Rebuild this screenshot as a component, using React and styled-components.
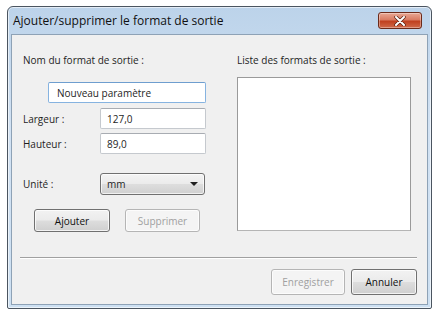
import styled, { createGlobalStyle } from 'styled-components';

const Global = createGlobalStyle`
    html, body {
        margin: 0;
        padding: 0;
        background: #ffffff;
    }
    body {
        font-family: "Open Sans", "Noto Sans", "DejaVu Sans", sans-serif;
        font-size: 10px;
        color: #1e1e1e;
    }
`

const Page = styled.div`
    width: 437px;
    height: 312px;
    padding: 6px 0 0 7px;
    box-sizing: border-box;
`

const Window = styled.div`
    width: 425px;
    height: 303px;
    box-sizing: border-box;
    border: 1px solid #4b5560;
    border-radius: 6px 6px 2px 2px;
    background: linear-gradient(180deg, #bcd3ea 0%, #d2e2f3 40%, #cde0f2 100%);
    display: flex;
    flex-direction: column;
    padding: 0 3px 3px 3px;
    box-shadow: inset 0 0 0 1px rgba(255,255,255,0.6);
`

const TitleBar = styled.div`
    height: 27px;
    display: flex;
    align-items: center;
    justify-content: space-between;
    padding: 0 6px 0 2px;
`

const Title = styled.span`
    font-size: 12px;
    color: #101010;
`

const CloseButton = styled.div`
    width: 44px;
    height: 17px;
    box-sizing: border-box;
    border: 1px solid #6b2a1a;
    border-radius: 3px;
    background: linear-gradient(180deg, #e9a894 0%, #d97b62 45%, #c0401f 55%, #d06a4a 100%);
    display: flex;
    align-items: center;
    justify-content: center;
    box-shadow: inset 0 0 0 1px rgba(255,255,255,0.35);
`

const Body = styled.div`
    flex: 1;
    background: #f0f0f0;
    border: 1px solid #8ea2b6;
    padding: 18px 10px 0 11px;
    display: flex;
    flex-direction: column;
`

const Columns = styled.div`
    display: flex;
    gap: 31px;
`

const Left = styled.div`
    width: 183px;
    display: flex;
    flex-direction: column;
`

const Right = styled.div`
    width: 174px;
    display: flex;
    flex-direction: column;
`

const Label = styled.div`
    height: 14px;
    line-height: 14px;
    white-space: nowrap;
`

const Row = styled.div`
    display: flex;
    align-items: center;
    margin-top: ${p => p.$top}px;
`

const RowLabel = styled.div`
    width: 77px;
    white-space: nowrap;
`

const TextBox = styled.div`
    box-sizing: border-box;
    height: 21px;
    width: ${p => p.$width}px;
    margin-left: ${p => p.$indent || 0}px;
    background: #ffffff;
    border: 1px solid ${p => p.$focus ? '#86b3e0' : '#c5c9ce'};
    border-top-color: ${p => p.$focus ? '#6e9ecf' : '#a8acb2'};
    border-radius: 2px;
    display: flex;
    align-items: center;
    padding-left: ${p => p.$pad || 6}px;
    white-space: nowrap;
`

const Select = styled.div`
    box-sizing: border-box;
    height: 22px;
    width: 105px;
    border: 1px solid #707070;
    border-radius: 3px;
    background: linear-gradient(180deg, #f4f4f4 0%, #ebebeb 48%, #dddddd 52%, #d0d0d0 100%);
    box-shadow: inset 0 0 0 1px rgba(255,255,255,0.7);
    display: flex;
    align-items: center;
    justify-content: space-between;
    padding: 0 6px 0 6px;
`

const Arrow = styled.span`
    width: 0;
    height: 0;
    border-left: 4px solid transparent;
    border-right: 4px solid transparent;
    border-top: 4px solid #202020;
`

const ButtonRow = styled.div`
    display: flex;
    gap: ${p => p.$gap}px;
    margin-top: ${p => p.$top || 0}px;
    padding-left: ${p => p.$indent || 0}px;
    justify-content: ${p => p.$end ? 'flex-end' : 'flex-start'};
`

const Button = styled.div`
    box-sizing: border-box;
    width: ${p => p.$width}px;
    height: ${p => p.$height}px;
    border: 1px solid ${p => p.$disabled ? '#b5b5b5' : '#707070'};
    border-radius: 3px;
    background: ${p => p.$disabled
        ? '#f4f4f4'
        : 'linear-gradient(180deg, #f2f2f2 0%, #ebebeb 48%, #dddddd 52%, #cfcfcf 100%)'};
    box-shadow: inset 0 0 0 1px rgba(255,255,255,0.75);
    color: ${p => p.$disabled ? '#a0a0a0' : '#101010'};
    display: flex;
    align-items: center;
    justify-content: center;
`

const ListBox = styled.div`
    margin-top: 10px;
    height: 154px;
    box-sizing: border-box;
    background: #ffffff;
    border: 1px solid #9a9a9a;
    border-bottom-color: #b5b5b5;
`

const Separator = styled.div`
    margin: 25px 0 0 -3px;
    height: 1px;
    background: #a0a0a0;
    border-bottom: 1px solid #ffffff;
`

function App() {
    return (
        <>
            <Global />
            <Page>
                <Window>
                    <TitleBar>
                        <Title>Ajouter/supprimer le format de sortie</Title>
                        <CloseButton>
                            <svg width="12" height="10" viewBox="0 0 12 10">
                                <path d="M2 1 L10 9 M10 1 L2 9" stroke="#5a2010" strokeWidth="3.4" strokeLinecap="round" />
                                <path d="M2 1 L10 9 M10 1 L2 9" stroke="#ffffff" strokeWidth="2" strokeLinecap="round" />
                            </svg>
                        </CloseButton>
                    </TitleBar>
                    <Body>
                        <Columns>
                            <Left>
                                <Label>Nom du format de sortie :</Label>
                                <Row $top={15}>
                                    <TextBox $width={158} $indent={25} $focus $pad={8}>Nouveau paramètre</TextBox>
                                </Row>
                                <Row $top={5}>
                                    <RowLabel>Largeur :</RowLabel>
                                    <TextBox $width={106}>127,0</TextBox>
                                </Row>
                                <Row $top={4}>
                                    <RowLabel>Hauteur :</RowLabel>
                                    <TextBox $width={106}>89,0</TextBox>
                                </Row>
                                <Row $top={19}>
                                    <RowLabel>Unité :</RowLabel>
                                    <Select>
                                        <span>mm</span>
                                        <Arrow />
                                    </Select>
                                </Row>
                                <ButtonRow $gap={15} $top={14} $indent={11}>
                                    <Button $width={76} $height={23}>Ajouter</Button>
                                    <Button $width={75} $height={23} $disabled>Supprimer</Button>
                                </ButtonRow>
                            </Left>
                            <Right>
                                <Label>Liste des formats de sortie :</Label>
                                <ListBox />
                            </Right>
                        </Columns>
                        <Separator />
                        <ButtonRow $gap={6} $top={10} $end>
                            <Button $width={74} $height={26} $disabled>Enregistrer</Button>
                            <Button $width={66} $height={26}>Annuler</Button>
                        </ButtonRow>
                    </Body>
                </Window>
            </Page>
        </>
    );
}

export default App;
